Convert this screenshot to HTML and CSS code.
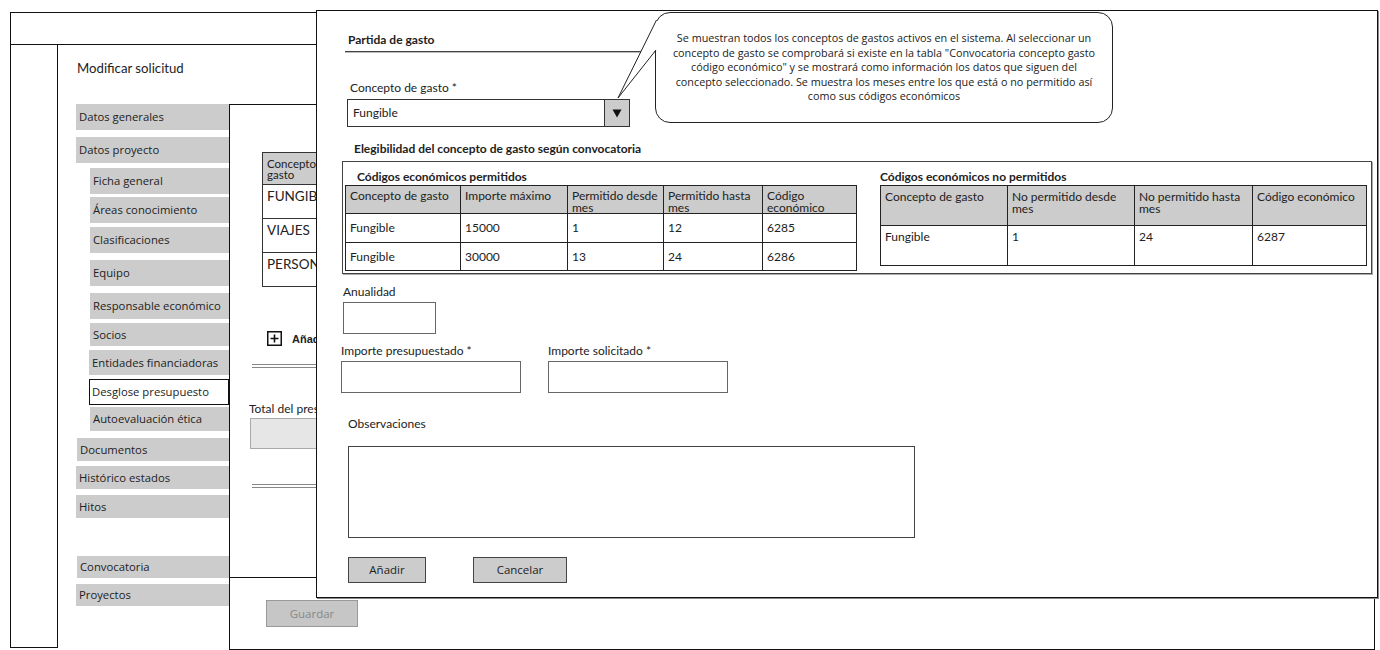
FILE: index.html
```html
<!DOCTYPE html>
<html lang="es">
<head>
<meta charset="utf-8">
<title>Modificar solicitud</title>
<link rel="stylesheet" href="styles.css">
</head>
<body>
<div class="app">
  <header class="topbar"></header>
  <div class="layout">
    <aside class="rail"></aside>
    <main class="main">
      <h1 class="page-title">Modificar solicitud</h1>
      <div class="workspace">
        <nav class="nav">
          <div class="nav-item">Datos generales</div>
          <div class="nav-item">Datos proyecto</div>
          <div class="nav-item sub">Ficha general</div>
          <div class="nav-item sub">Áreas conocimiento</div>
          <div class="nav-item sub">Clasificaciones</div>
          <div class="nav-item sub">Equipo</div>
          <div class="nav-item sub">Responsable económico</div>
          <div class="nav-item sub">Socios</div>
          <div class="nav-item sub">Entidades financiadoras</div>
          <div class="nav-item sub active">Desglose presupuesto</div>
          <div class="nav-item sub">Autoevaluación ética</div>
          <div class="nav-item">Documentos</div>
          <div class="nav-item">Histórico estados</div>
          <div class="nav-item">Hitos</div>
          <div class="nav-item">Convocatoria</div>
          <div class="nav-item">Proyectos</div>
        </nav>
        <section class="panel">
          <table class="bg-table">
            <thead>
              <tr><th class="c1">Concepto de gasto</th><th></th><th></th><th></th><th></th></tr>
            </thead>
            <tbody>
              <tr><td>FUNGIBLE</td><td></td><td></td><td></td><td></td></tr>
              <tr><td>VIAJES</td><td></td><td></td><td></td><td></td></tr>
              <tr><td>PERSONAL</td><td></td><td></td><td></td><td></td></tr>
            </tbody>
          </table>
          <div class="add-row">
            <svg class="plus-box" width="15" height="15" viewBox="0 0 15 15"><rect x="0.75" y="0.75" width="13.5" height="13.5" fill="#fff" stroke="#111" stroke-width="1.5"/><path d="M7.5 3.5v8M3.5 7.5h8" stroke="#111" stroke-width="1.6"/></svg>
            <span class="add-text">Añadir</span>
          </div>
          <div class="double-rule"></div>
          <div class="total-label">Total del presupuesto</div>
          <div class="total-input"></div>
          <div class="double-rule rule-second"></div>
          <div class="panel-footer">
            <div class="btn-guardar">Guardar</div>
          </div>
        </section>
      </div>
    </main>
  </div>

  <div class="dialog">
    <div class="dlg-heading">Partida de gasto</div>
    <div class="lbl lbl-concepto">Concepto de gasto *</div>
    <div class="select">
      <span class="select-value">Fungible</span>
      <span class="select-btn"><svg width="10" height="9" viewBox="0 0 10 9"><polygon points="0.5,0.5 9.5,0.5 5,8.5" fill="#111"/></svg></span>
    </div>
    <div class="elig-title">Elegibilidad del concepto de gasto según convocatoria</div>
    <div class="elig-box">
      <div class="elig-col col-allowed">
        <div class="col-title indent">Códigos económicos permitidos</div>
        <table class="grid grid-allowed">
          <thead>
            <tr><th class="w115">Concepto de gasto</th><th class="w107">Importe máximo</th><th class="w96">Permitido desde mes</th><th class="w99">Permitido hasta mes</th><th>Código económico</th></tr>
          </thead>
          <tbody>
            <tr class="r1"><td>Fungible</td><td>15000</td><td>1</td><td>12</td><td>6285</td></tr>
            <tr class="r2"><td>Fungible</td><td>30000</td><td>13</td><td>24</td><td>6286</td></tr>
          </tbody>
        </table>
      </div>
      <div class="elig-col col-denied">
        <div class="col-title">Códigos económicos no permitidos</div>
        <table class="grid grid-denied">
          <thead>
            <tr><th class="w127">Concepto de gasto</th><th class="w127">No permitido desde mes</th><th class="w118">No permitido hasta mes</th><th>Código económico</th></tr>
          </thead>
          <tbody>
            <tr><td>Fungible</td><td>1</td><td>24</td><td>6287</td></tr>
          </tbody>
        </table>
      </div>
    </div>
    <div class="lbl lbl-anual">Anualidad</div>
    <div class="input input-anual"></div>
    <div class="amount-row">
      <div class="amount-group">
        <div class="lbl">Importe presupuestado *</div>
        <div class="input input-amount"></div>
      </div>
      <div class="amount-group">
        <div class="lbl">Importe solicitado *</div>
        <div class="input input-amount"></div>
      </div>
    </div>
    <div class="lbl lbl-obs">Observaciones</div>
    <div class="input textarea"></div>
    <div class="btn-row">
      <div class="btn btn-add">Añadir</div>
      <div class="btn btn-cancel">Cancelar</div>
    </div>
  </div>

  <div class="callout">
    <p class="callout-text">Se muestran todos los conceptos de gastos activos en el sistema. Al seleccionar un<br>concepto de gasto se comprobará si existe en la tabla "Convocatoria concepto gasto<br>código económico" y se mostrará como información los datos que siguen del<br>concepto seleccionado. Se muestra los meses entre los que está o no permitido así<br>como sus códigos económicos</p>
  </div>
  <svg class="callout-tail" width="60" height="95" viewBox="0 0 60 95">
    <polygon points="8,88 46.5,10 49,13 49,41 46,40" fill="#fff"/>
    <polyline points="46.5,10 8,88 46,40" fill="none" stroke="#222" stroke-width="1"/>
  </svg>
</div>
</body>
</html>
```

FILE: styles.css
```css
* { box-sizing: border-box; }
html, body { margin: 0; padding: 0; background: #fff; }
body {
  width: 1380px;
  height: 650px;
  overflow: hidden;
  font-family: Lato, "Open Sans", sans-serif;
  color: #222;
}
.app { position: relative; display: flow-root; width: 1380px; height: 650px; }

/* ---------- base frame ---------- */
.topbar {
  margin: 12px 0 0 10px;
  width: 1360px;
  height: 33px;
  border: 1px solid #111;
}
.layout { display: flex; align-items: flex-start; }
.rail {
  margin-left: 10px;
  width: 48px;
  height: 603px;
  border: 1px solid #111;
  border-top: 0;
  flex: none;
}
.main { padding-left: 18px; }
.page-title {
  margin: 13px 0 0 1px;
  font-size: 13.2px;
  font-weight: 400;
  line-height: 20px;
  color: #222;
}
.workspace { display: flex; align-items: flex-start; margin-top: 26px; }

/* ---------- navigation ---------- */
.nav { width: 153px; flex: none; display: flex; flex-direction: column; }
.nav-item {
  background: #cccccc;
  font-family: "Open Sans", sans-serif;
  font-size: 11.3px;
  height: 26px;
  line-height: 26px;
  padding-left: 3px;
  white-space: nowrap;
  color: #222;
}
.nav-item.sub { margin-left: 14px; }
.nav-item.active { background: #fff; border: 1px solid #111; line-height: 24px; padding-left: 2px; }
.nav-item:nth-child(2) { margin-top: 7px; }
.nav-item:nth-child(3) { margin-top: 5px; }
.nav-item:nth-child(4) { margin-top: 3px; }
.nav-item:nth-child(5) { margin-top: 4px; }
.nav-item:nth-child(6) { margin-top: 7px; }
.nav-item:nth-child(7) { margin-top: 7px; }
.nav-item:nth-child(8) { margin-top: 4px; height: 23px; line-height: 23px; }
.nav-item:nth-child(9) { margin-top: 4px; height: 25px; line-height: 25px; margin-left: 13px; }
.nav-item:nth-child(10) { margin-top: 4px; margin-left: 13px; }
.nav-item:nth-child(11) { margin-top: 2px; height: 24px; line-height: 24px; }
.nav-item:nth-child(12) { margin-top: 7px; height: 23px; line-height: 23px; margin-left: 1px; }
.nav-item:nth-child(13) { margin-top: 5px; height: 23px; line-height: 23px; }
.nav-item:nth-child(14) { margin-top: 6px; height: 23px; line-height: 23px; }
.nav-item:nth-child(15) { margin-top: 38px; height: 22px; line-height: 22px; margin-left: 1px; }
.nav-item:nth-child(16) { margin-top: 6px; height: 22px; line-height: 22px; }

/* ---------- background panel ---------- */
.panel {
  width: 1146px;
  height: 546px;
  border: 1px solid #111;
  display: flex;
  flex-direction: column;
  align-items: flex-start;
  flex: none;
}
.bg-table {
  margin: 47px 0 0 32px;
  border-collapse: collapse;
  table-layout: fixed;
  width: 700px;
}
.bg-table th {
  background: #cccccc;
  border: 1px solid #333;
  height: 32px;
  font-size: 11.5px;
  font-weight: 400;
  line-height: 11px;
  text-align: left;
  vertical-align: top;
  padding: 5px 4px 0;
  width: 150px;
}
.bg-table th.c1 { width: 88px; }
.bg-table td {
  border: 1px solid #333;
  height: 34px;
  font-size: 13.5px;
  line-height: 16px;
  vertical-align: top;
  padding: 3px 4px 0;
  white-space: nowrap;
  color: #222;
}
.add-row { margin: 44px 0 0 37px; display: flex; align-items: center; height: 15px; gap: 10px; }
.plus-box { display: block; }
.add-text { font-family: "Liberation Sans", Arial, sans-serif; font-weight: 700; font-size: 11px; color: #222; }
.double-rule {
  margin: 18px 0 0 22px;
  width: 800px;
  height: 4px;
  border-top: 1px solid #888;
  border-bottom: 1px solid #888;
}
.rule-second { margin-top: 35px; }
.total-label { margin: 34px 0 0 19px; font-size: 12px; line-height: 14px; white-space: nowrap; }
.total-input {
  margin: 2px 0 0 20px;
  width: 200px;
  height: 31px;
  background: #e6e6e6;
  border: 1px solid #aaa;
}
.panel-footer {
  margin-top: auto;
  width: 100%;
  height: 72px;
  border-top: 1px solid #111;
  padding: 22px 0 0 36px;
}
.btn-guardar {
  width: 92px;
  height: 27px;
  background: #c6c6c6;
  border: 1px solid #999;
  color: #888;
  font-family: "Open Sans", sans-serif;
  font-size: 11.5px;
  line-height: 25px;
  text-align: center;
}

/* ---------- dialog ---------- */
.dialog {
  position: absolute;
  left: 316px;
  top: 10px;
  width: 1062px;
  height: 588px;
  border: 1px solid #111;
  background: #fff;
  box-shadow: 1px 1px 0 #888;
  font-size: 12px;
  color: #222;
}
.dlg-heading {
  margin: 22px 0 0 28px;
  width: 700px;
  padding: 0 0 4px 3px;
  font-weight: 700;
  line-height: 14px;
  border-bottom: 1px solid #444;
  box-shadow: 0 1px 0 #bbb;
}
.lbl { font-size: 12px; line-height: 14px; white-space: nowrap; }
.lbl-concepto { margin: 29px 0 0 33px; }
.select {
  margin: 4px 0 0 30px;
  width: 283px;
  height: 28px;
  border: 1px solid #333;
  display: flex;
}
.select-value { flex: 1; padding-left: 5px; line-height: 26px; }
.select-btn {
  width: 25px;
  background: #cccccc;
  border-left: 1px solid #333;
  display: flex;
  align-items: center;
  justify-content: center;
}
.elig-title { margin: 15px 0 0 37px; font-weight: 700; line-height: 14px; }
.elig-box {
  margin: 5px 0 0 25px;
  width: 1030px;
  height: 113px;
  border: 1px solid #444;
  box-shadow: 1px 1px 0 #aaa;
  padding: 8px 0 0 2px;
  display: flex;
  align-items: flex-start;
  gap: 23px;
}
.col-allowed { width: 512px; }
.col-denied { width: 487px; }
.col-title { font-weight: 700; line-height: 14px; margin-bottom: 1px; white-space: nowrap; }
.col-title.indent { padding-left: 12px; }
.grid {
  border-collapse: collapse;
  table-layout: fixed;
  width: 100%;
  font-size: 12px;
}
.grid th {
  background: #cccccc;
  border: 1px solid #222;
  font-weight: 400;
  text-align: left;
  vertical-align: top;
  line-height: 11.5px;
  padding: 4px 4px 0;
  overflow: hidden;
}
.grid td {
  border: 1px solid #222;
  line-height: 14px;
  padding: 0 4px;
  vertical-align: middle;
}
.grid-allowed th { height: 28px; }
.grid-allowed .r1 td { height: 29px; }
.grid-allowed .r2 td { height: 28px; }
.grid-denied th { height: 40px; padding-top: 5px; }
.grid-denied td { height: 40px; vertical-align: top; padding-top: 4px; }
.w115 { width: 115px; }
.w107 { width: 107px; }
.w96 { width: 96px; }
.w99 { width: 99px; }
.w127 { width: 127px; }
.w118 { width: 118px; }

.input { border: 1px solid #666; background: #fff; }
.lbl-anual { margin: 11px 0 0 26px; }
.input-anual { margin: 3px 0 0 26px; width: 93px; height: 32px; }
.amount-row { display: flex; gap: 27px; margin: 10px 0 0 24px; }
.amount-group { width: 180px; }
.input-amount { margin-top: 3px; width: 180px; height: 32px; }
.lbl-obs { margin: 24px 0 0 31px; }
.textarea { margin: 15px 0 0 31px; width: 567px; height: 92px; border-color: #444; }
.btn-row { display: flex; gap: 47px; margin: 19px 0 0 31px; }
.btn {
  height: 26px;
  background: #cccccc;
  border: 1px solid #444;
  font-family: "Open Sans", sans-serif;
  font-size: 11.5px;
  line-height: 24px;
  text-align: center;
  color: #222;
}
.btn-add { width: 78px; }
.btn-cancel { width: 94px; }

/* ---------- callout ---------- */
.callout {
  position: absolute;
  left: 655px;
  top: 12px;
  width: 458px;
  height: 111px;
  border: 1px solid #222;
  border-radius: 15px;
  background: #fff;
  display: flex;
  align-items: center;
  justify-content: center;
}
.callout-text {
  margin: 0;
  font-family: "Open Sans", sans-serif;
  font-size: 10.8px;
  line-height: 14.5px;
  text-align: center;
  white-space: nowrap;
  color: #222;
}
.callout-tail { position: absolute; left: 610px; top: 10px; }
```
